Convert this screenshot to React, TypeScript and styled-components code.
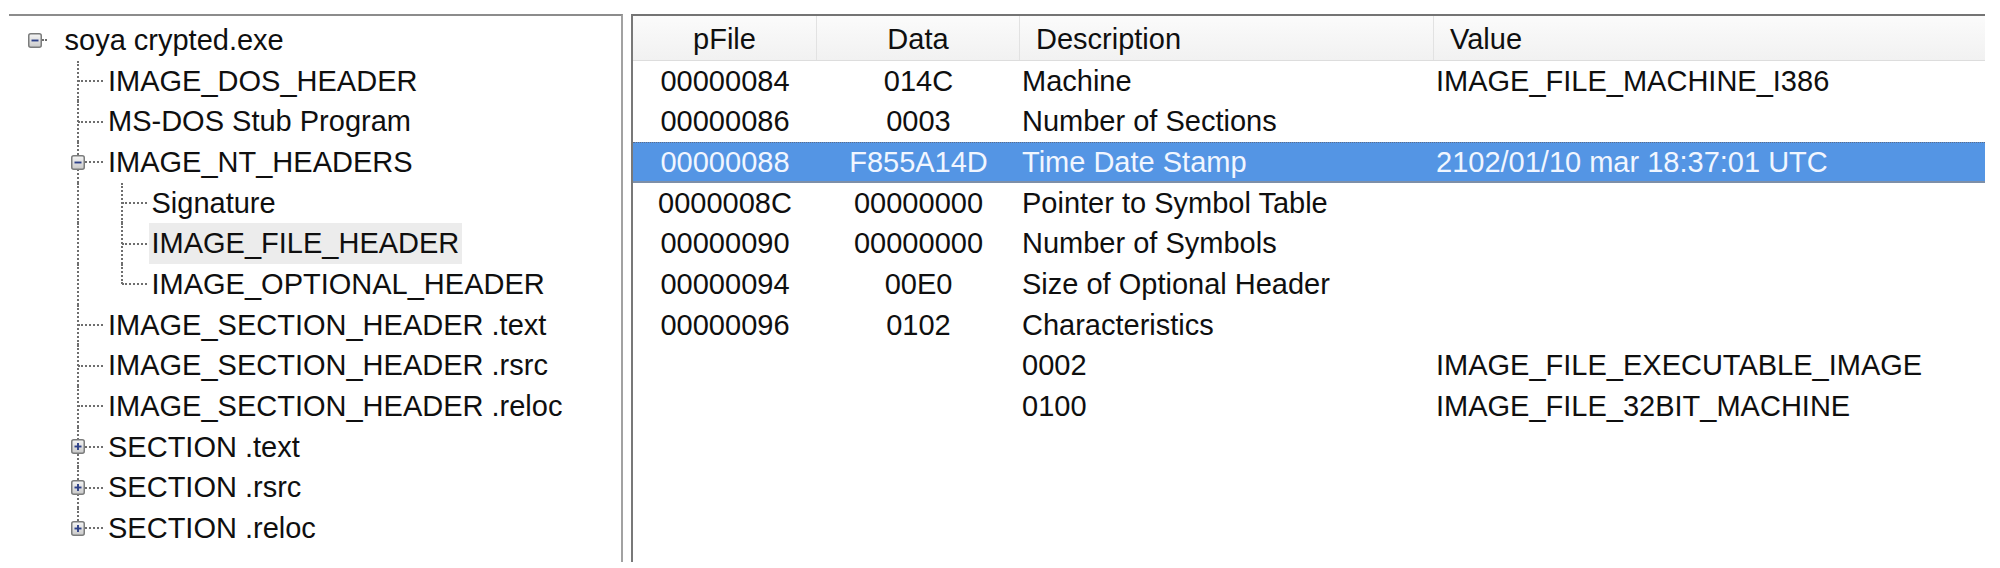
import styled, { createGlobalStyle } from "styled-components";

const GlobalStyle = createGlobalStyle`
  html, body {
    margin: 0;
    background: #ffffff;
  }
  body {
    font-family: "Liberation Sans", Arial, sans-serif;
    font-size: 29px;
    color: #0f0f0f;
  }
`;

const ROW_HEIGHT = 40.67;
const DOTS = "#6e6e6e";

const Layout = styled.div`
  display: flex;
  gap: 8px;
  padding: 14px 0 0 9px;
  height: 568px;
  box-sizing: border-box;
`;

/* ---------- tree pane ---------- */

const TreePanel = styled.div`
  width: 614px;
  height: 548px;
  box-sizing: border-box;
  border-top: 2px solid #8c8c8c;
  border-right: 2px solid #a2a2a2;
  padding: 4px 0 0 4px;
  overflow: hidden;
`;

const TreeRow = styled.div`
  display: flex;
  align-items: stretch;
  height: ${ROW_HEIGHT}px;
`;

type GuideKind = "none" | "pipe" | "tee" | "end" | "root";

// one indent column of the tree
const Guide = styled.span`
  position: relative;
  flex: none;
  width: 43.5px;
  display: flex;
  align-items: center;
  justify-content: center;
`;

// dotted vertical stem running down an indent column
const Stem = styled.span<{ $half?: boolean }>`
  position: absolute;
  left: calc(50% - 1px);
  top: 0;
  bottom: ${(p) => (p.$half ? "50%" : "0px")};
  width: 0;
  border-left: 2px dotted ${DOTS};
`;

// dotted branch from the stem across to the label
const Branch = styled.span<{ $short?: boolean }>`
  position: absolute;
  left: 50%;
  right: ${(p) => (p.$short ? "10px" : "-3px")};
  top: calc(50% - 1px);
  height: 0;
  border-top: 2px dotted ${DOTS};
`;

const Expander = styled.svg`
  position: relative;
  z-index: 1;
  display: block;
`;

const Label = styled.span<{ $selected?: boolean }>`
  margin-left: 5px;
  padding: 0 3px;
  line-height: ${ROW_HEIGHT}px;
  white-space: nowrap;
  background: ${(p) => (p.$selected ? "#ececec" : "transparent")};
`;

function ExpandBox({ open }: { open: boolean }) {
  return (
    <Expander width="14" height="15" viewBox="0 0 14 15">
      <defs>
        <linearGradient id="expander-fill" x1="0" y1="0" x2="0" y2="1">
          <stop offset="0" stopColor="#f6f6f6" />
          <stop offset="1" stopColor="#c9c9c9" />
        </linearGradient>
      </defs>
      <rect
        x="0.75"
        y="0.75"
        width="12.5"
        height="13.5"
        rx="2"
        fill="url(#expander-fill)"
        stroke="#7b7c7c"
        strokeWidth="1.5"
      />
      <path d="M3.5 7.5h7" stroke="#2e4188" strokeWidth="1.9" />
      {!open && <path d="M7 4v7" stroke="#2e4188" strokeWidth="1.9" />}
    </Expander>
  );
}

function GuideCell({ kind, children }: { kind: GuideKind; children?: React.ReactNode }) {
  return (
    <Guide>
      {(kind === "pipe" || kind === "tee") && <Stem />}
      {kind === "end" && <Stem $half />}
      {kind !== "none" && kind !== "pipe" && <Branch $short={kind === "root"} />}
      {children}
    </Guide>
  );
}

interface TreeNode {
  label: string;
  open?: boolean;
  selected?: boolean;
  kids?: TreeNode[];
}

const tree: TreeNode = {
  label: "soya crypted.exe",
  open: true,
  kids: [
    { label: "IMAGE_DOS_HEADER" },
    { label: "MS-DOS Stub Program" },
    {
      label: "IMAGE_NT_HEADERS",
      open: true,
      kids: [
        { label: "Signature" },
        { label: "IMAGE_FILE_HEADER", selected: true },
        { label: "IMAGE_OPTIONAL_HEADER" },
      ],
    },
    { label: "IMAGE_SECTION_HEADER .text" },
    { label: "IMAGE_SECTION_HEADER .rsrc" },
    { label: "IMAGE_SECTION_HEADER .reloc" },
    { label: "SECTION .text", kids: [] },
    { label: "SECTION .rsrc", kids: [] },
    { label: "SECTION .reloc", kids: [] },
  ],
};

interface FlatRow {
  node: TreeNode;
  guides: GuideKind[];
}

// walk the tree and work out which dotted guide goes in each indent column
function flatten(
  node: TreeNode,
  trail: boolean[],
  isRoot: boolean,
  isLast: boolean,
  out: FlatRow[] = []
): FlatRow[] {
  const own: GuideKind = isRoot ? "root" : isLast ? "end" : "tee";
  out.push({
    node,
    guides: [...trail.map((more) => (more ? "pipe" : "none") as GuideKind), own],
  });
  if (node.open && node.kids) {
    const nextTrail = [...trail, !isRoot && !isLast];
    node.kids.forEach((kid, i) =>
      flatten(kid, nextTrail, false, i === node.kids!.length - 1, out)
    );
  }
  return out;
}

/* ---------- list pane ---------- */

const ListPanel = styled.div`
  width: 1354px;
  height: 548px;
  box-sizing: border-box;
  border-top: 2px solid #747474;
  border-left: 2px solid #787878;
  overflow: hidden;
`;

const COLUMNS = "184px 203px 414px 1fr";

const HeaderRow = styled.div`
  display: grid;
  grid-template-columns: ${COLUMNS};
  height: 44.67px;
  box-sizing: border-box;
  background: linear-gradient(#fbfbfb, #f1f1f1);
  border-bottom: 1px solid #dddddd;
`;

const HeaderCell = styled.div<{ $align: "center" | "left" }>`
  padding-top: 3px;
  padding-left: ${(p) => (p.$align === "left" ? "16px" : "0")};
  line-height: ${ROW_HEIGHT}px;
  text-align: ${(p) => p.$align};
  color: #0f0f0f;
  border-right: 1px solid #e2e2e2;
  white-space: nowrap;

  &:last-child {
    border-right: none;
  }
`;

const DataRow = styled.div<{ $selected?: boolean }>`
  display: grid;
  grid-template-columns: ${COLUMNS};
  height: ${ROW_HEIGHT}px;
  box-sizing: border-box;
  background: ${(p) => (p.$selected ? "#5495e4" : "transparent")};
  color: ${(p) => (p.$selected ? "#f1f6ff" : "inherit")};
  border-top: 1px dotted ${(p) => (p.$selected ? "#5a6c8a" : "transparent")};
  box-shadow: ${(p) => (p.$selected ? "inset 0 -2px 0 #7d8fa8" : "none")};
`;

const Cell = styled.div<{ $align: "center" | "left" }>`
  padding-left: ${(p) => (p.$align === "left" ? "2px" : "0")};
  line-height: ${ROW_HEIGHT - 1}px;
  text-align: ${(p) => p.$align};
  white-space: nowrap;
`;

interface Field {
  offset: string;
  data: string;
  description: string;
  value: string;
  selected?: boolean;
}

const fields: Field[] = [
  { offset: "00000084", data: "014C", description: "Machine", value: "IMAGE_FILE_MACHINE_I386" },
  { offset: "00000086", data: "0003", description: "Number of Sections", value: "" },
  {
    offset: "00000088",
    data: "F855A14D",
    description: "Time Date Stamp",
    value: "2102/01/10 mar 18:37:01 UTC",
    selected: true,
  },
  { offset: "0000008C", data: "00000000", description: "Pointer to Symbol Table", value: "" },
  { offset: "00000090", data: "00000000", description: "Number of Symbols", value: "" },
  { offset: "00000094", data: "00E0", description: "Size of Optional Header", value: "" },
  { offset: "00000096", data: "0102", description: "Characteristics", value: "" },
  { offset: "", data: "", description: "0002", value: "IMAGE_FILE_EXECUTABLE_IMAGE" },
  { offset: "", data: "", description: "0100", value: "IMAGE_FILE_32BIT_MACHINE" },
];

export default function App() {
  const rows = flatten(tree, [], true, true);

  return (
    <>
      <GlobalStyle />
      <Layout>
        <TreePanel>
          {rows.map(({ node, guides }) => (
            <TreeRow key={node.label}>
              {guides.map((kind, i) => (
                <GuideCell key={i} kind={kind}>
                  {i === guides.length - 1 && node.kids && <ExpandBox open={!!node.open} />}
                </GuideCell>
              ))}
              <Label $selected={node.selected}>{node.label}</Label>
            </TreeRow>
          ))}
        </TreePanel>

        <ListPanel>
          <HeaderRow>
            <HeaderCell $align="center">pFile</HeaderCell>
            <HeaderCell $align="center">Data</HeaderCell>
            <HeaderCell $align="left">Description</HeaderCell>
            <HeaderCell $align="left">Value</HeaderCell>
          </HeaderRow>
          {fields.map((f, i) => (
            <DataRow key={i} $selected={f.selected}>
              <Cell $align="center">{f.offset}</Cell>
              <Cell $align="center">{f.data}</Cell>
              <Cell $align="left">{f.description}</Cell>
              <Cell $align="left">{f.value}</Cell>
            </DataRow>
          ))}
        </ListPanel>
      </Layout>
    </>
  );
}
